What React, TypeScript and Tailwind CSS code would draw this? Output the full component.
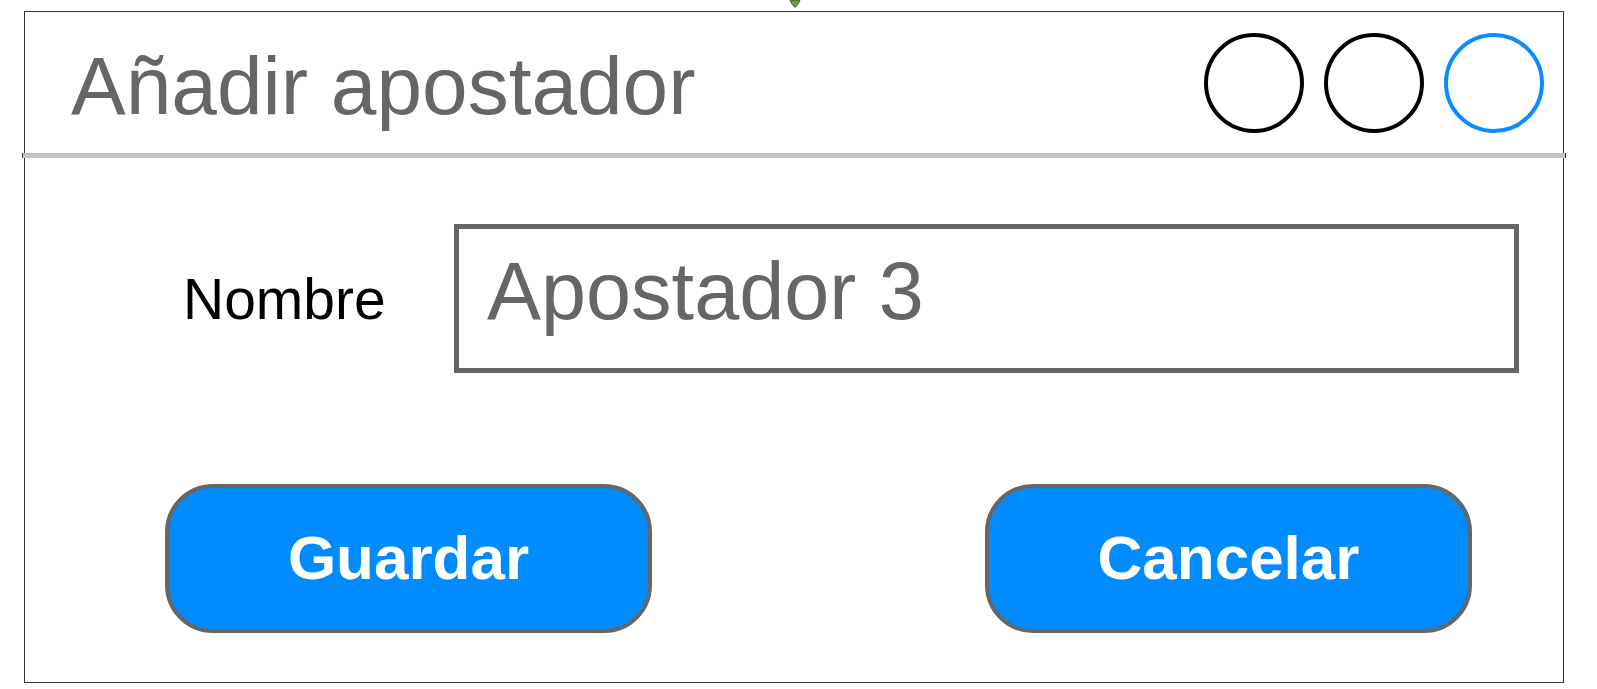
import React from "react";

export default function App() {
  return (
    <div className="relative w-[1597px] h-[689px] bg-white pt-[11px] pl-[24px] font-['Liberation_Sans',Arial,sans-serif] overflow-hidden">
      <svg className="absolute left-[789px] top-0" width="12" height="8" viewBox="0 0 12 8">
        <path d="M1 0 L11 0 Q10 4 6 7.5 Q2 4 1 0 Z" fill="#6b9b4b" stroke="#3d5a2a" strokeWidth="1" />
      </svg>
      <div className="w-[1540px] h-[672px] border border-[#333333] flex flex-col">
        <div className="h-[141px] flex items-center justify-between pl-[46px] pr-[19px]">
          <div className="text-[82px] leading-none text-[#666666] pt-[6px]">Añadir apostador</div>
          <div className="flex items-center gap-[20px]">
            <div className="w-[100px] h-[100px] rounded-full border-[4px] border-black" />
            <div className="w-[100px] h-[100px] rounded-full border-[4px] border-black" />
            <div className="w-[100px] h-[100px] rounded-full border-[4px] border-[#0a8cff]" />
          </div>
        </div>
        <div className="-mx-[3px] h-[5px] bg-[#c4c4c4] border-x border-[#333333]" />
        <div className="flex flex-col pt-[66px]">
          <div className="flex items-center pl-[158px]">
            <div className="w-[271px] text-[57px] leading-none text-black pt-[2px]">Nombre</div>
            <div className="w-[1065px] h-[149px] border-[5px] border-[#666666] flex items-center pl-[28px]">
              <span className="text-[81px] leading-none text-[#666666] -mt-[14px]">Apostador 3</span>
            </div>
          </div>
          <div className="flex items-center pl-[140px] gap-[333px] mt-[111px]">
            <div className="w-[487px] h-[149px] rounded-[48px] border-[4px] border-[#666666] bg-[#008cff] flex items-center justify-center">
              <span className="text-[62px] font-bold leading-none text-white -mt-[2px]">Guardar</span>
            </div>
            <div className="w-[487px] h-[149px] rounded-[48px] border-[4px] border-[#666666] bg-[#008cff] flex items-center justify-center">
              <span className="text-[62px] font-bold leading-none text-white -mt-[2px]">Cancelar</span>
            </div>
          </div>
        </div>
      </div>
    </div>
  );
}
